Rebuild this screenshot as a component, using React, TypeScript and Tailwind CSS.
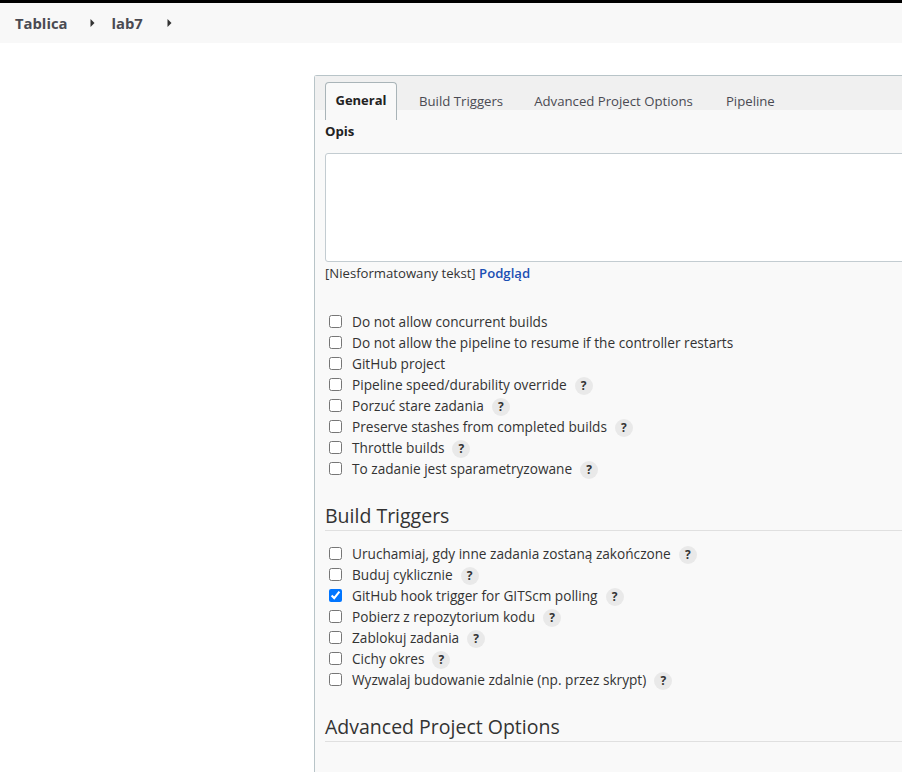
const general = [
  { label: "Do not allow concurrent builds" },
  { label: "Do not allow the pipeline to resume if the controller restarts" },
  { label: "GitHub project" },
  { label: "Pipeline speed/durability override", help: true },
  { label: "Porzuć stare zadania", help: true },
  { label: "Preserve stashes from completed builds", help: true },
  { label: "Throttle builds", help: true },
  { label: "To zadanie jest sparametryzowane", help: true },
];

const triggers = [
  { label: "Uruchamiaj, gdy inne zadania zostaną zakończone", help: true },
  { label: "Buduj cyklicznie", help: true },
  { label: "GitHub hook trigger for GITScm polling", help: true, checked: true },
  { label: "Pobierz z repozytorium kodu", help: true },
  { label: "Zablokuj zadania", help: true },
  { label: "Cichy okres", help: true },
  { label: "Wyzwalaj budowanie zdalnie (np. przez skrypt)", help: true },
];

type Option = { label: string; help?: boolean; checked?: boolean };

function Caret() {
  return (
    <svg width="5" height="8" viewBox="0 0 5 8" className="fill-[#333]">
      <path d="M0.5 0 L4.5 4 L0.5 8 Z" />
    </svg>
  );
}

function OptionRow({ option }: { option: Option }) {
  return (
    <div className="flex h-[21px] items-center text-[#333]">
      <input
        type="checkbox"
        readOnly
        checked={!!option.checked}
        className="mb-[3px] ml-[4px] h-[13px] w-[13px] accent-[#0075ff]"
      />
      <span className="ml-[10px] text-[13.65px] font-medium">{option.label}</span>
      {option.help && (
        <span className="ml-[8px] flex h-[18px] w-[18px] items-center justify-center rounded-full bg-[#e9e9e9] text-[12px] font-bold text-[#333]">
          ?
        </span>
      )}
    </div>
  );
}

export default function App() {
  return (
    <div className="h-[772px] w-[902px] overflow-hidden bg-white font-['Open_Sans',sans-serif]">
      <div className="h-[3px] bg-black" />
      <div className="flex h-[40px] items-center bg-[#f8f8f8] pl-[15px] text-[14.8px] font-bold text-[#4a4a52]">
        <span>Tablica</span>
        <span className="ml-[23px]"><Caret /></span>
        <span className="ml-[16px]">lab7</span>
        <span className="ml-[24px]"><Caret /></span>
      </div>
      <div className="ml-[314px] mt-[32px] h-[697px] rounded-tl-[3px] border-l border-t border-[#b8c4c8] bg-[#f9f9f9]">
        <div className="flex h-[34px] items-start bg-[#f0f0f0] pl-[10px] text-[13.2px] text-[#4a4a52]">
          <div className="mt-[6px] flex h-[38px] w-[72px] items-center justify-center rounded-t-[4px] border-x border-t border-[#a9b4b8] bg-[#f9f9f9] pb-px text-[13px] font-bold text-[#222] [border-bottom:0]">
            General
          </div>
          <div className="ml-[22px] mt-[16px]">Build Triggers</div>
          <div className="ml-[31px] mt-[16px]">Advanced Project Options</div>
          <div className="ml-[33px] mt-[16px]">Pipeline</div>
        </div>
        <div className="pl-[10px]">
          <div className="mt-[12px] text-[13.2px] font-bold leading-[18px] text-[#222]">Opis</div>
          <div className="mt-[13px] h-[109px] w-[700px] rounded-[3px] border border-[#c3ccd1] bg-white" />
          <div className="mt-[1px] text-[13.15px] leading-[20px] text-[#333]">
            [Niesformatowany tekst] <span className="font-semibold text-[#1b4fb3]">Podgląd</span>
          </div>
          <div className="mt-[29px]">
            {general.map((option) => (
              <OptionRow key={option.label} option={option} />
            ))}
          </div>
          <div className="mt-[22px] border-b border-[#e0e0e0] pb-[1px] text-[19.5px] font-medium leading-[27px] text-[#333]">
            Build Triggers
          </div>
          <div className="mt-[13px]">
            {triggers.map((option) => (
              <OptionRow key={option.label} option={option} />
            ))}
          </div>
          <div className="mt-[22px] border-b border-[#e0e0e0] pb-[1px] text-[19.5px] font-medium leading-[27px] text-[#333]">
            Advanced Project Options
          </div>
        </div>
      </div>
    </div>
  );
}
